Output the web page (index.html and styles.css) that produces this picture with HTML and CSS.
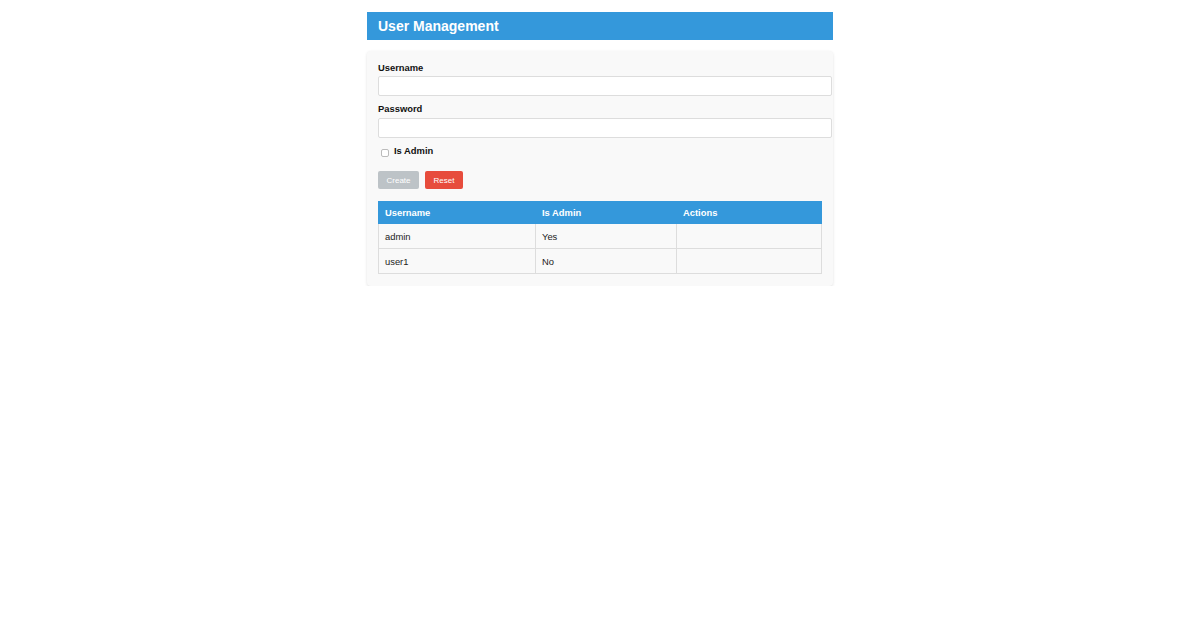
FILE: index.html
```html
<!DOCTYPE html>
<html>
<head>
<meta charset="utf-8">
<link rel="stylesheet" href="styles.css">
</head>
<body>
<div class="container">
  <div class="header">User Management</div>
  <div class="card">
    <div class="group">
      <label class="lbl">Username</label>
      <input class="inp" type="text">
    </div>
    <div class="group">
      <label class="lbl">Password</label>
      <input class="inp" type="password">
    </div>
    <div class="check-row">
      <span class="box"></span>
      <span class="lbl">Is Admin</span>
    </div>
    <div class="buttons">
      <button class="btn btn-create">Create</button>
      <button class="btn btn-reset">Reset</button>
    </div>
    <table class="users">
      <thead>
        <tr><th class="c1">Username</th><th class="c2">Is Admin</th><th class="c3">Actions</th></tr>
      </thead>
      <tbody>
        <tr><td>admin</td><td>Yes</td><td></td></tr>
        <tr><td>user1</td><td>No</td><td></td></tr>
      </tbody>
    </table>
  </div>
</div>
</body>
</html>
```
FILE: styles.css
```css
html, body { margin: 0; padding: 0; background: #fff; }
body { font-family: "Liberation Sans", Arial, sans-serif; color: #111; }
.container { width: 466px; margin: 12px auto 0; }
.header {
  background: #3498db; color: #fff; font-weight: bold; font-size: 14px;
  height: 28px; line-height: 28px; padding-left: 11px;
}
.card {
  margin-top: 11px; background: #f9f9f9; border-radius: 4px;
  box-shadow: 0 1px 3px rgba(0,0,0,0.12);
  padding: 11px 11px 12px 11px;
}
.group { margin-bottom: 7px; }
.group + .group { margin-bottom: 7px; }
.lbl { display: block; font-size: 9.4px; font-weight: bold; line-height: 12px; margin-bottom: 3px; color: #111; }
.group:first-child .lbl { margin-bottom: 2px; }
.inp {
  display: block; box-sizing: border-box; width: 454px; height: 20px;
  border: 1px solid #ddd; border-radius: 2px; background: #fff; margin: 0; padding: 0 6px;
}
.check-row { display: flex; align-items: flex-start; gap: 5px; height: 12px; margin-bottom: 14px; padding-left: 3px; }
.check-row .lbl { margin: 0; }
.box { width: 6px; height: 6px; border: 1px solid #bbb; border-radius: 2px; background: #fff; margin-top: 4px; }
.buttons { display: flex; gap: 6px; margin-bottom: 12px; }
.btn {
  height: 18px; border: none; border-radius: 2px; color: #fff; font-family: "Liberation Sans", Arial, sans-serif;
  font-size: 8px; padding: 0 8px; margin: 0;
}
.btn-create { background: #bdc3c7; width: 41px; }
.btn-reset { background: #e74c3c; width: 38px; }
.users { border-collapse: collapse; width: 444px; font-size: 9.4px; }
.users th {
  background: #3498db; color: #fff; font-weight: bold; text-align: left;
  height: 22px; padding: 0 6px; border: 1px solid #3498db; border-left-color: #d6e6f2; box-sizing: border-box;
}
.users th.c1 { width: 157px; border-left-color: #3498db; }
.users th.c2 { width: 141px; }
.users td { height: 25px; padding: 0 6px; border: 1px solid #ddd; color: #222; box-sizing: border-box; }
```
